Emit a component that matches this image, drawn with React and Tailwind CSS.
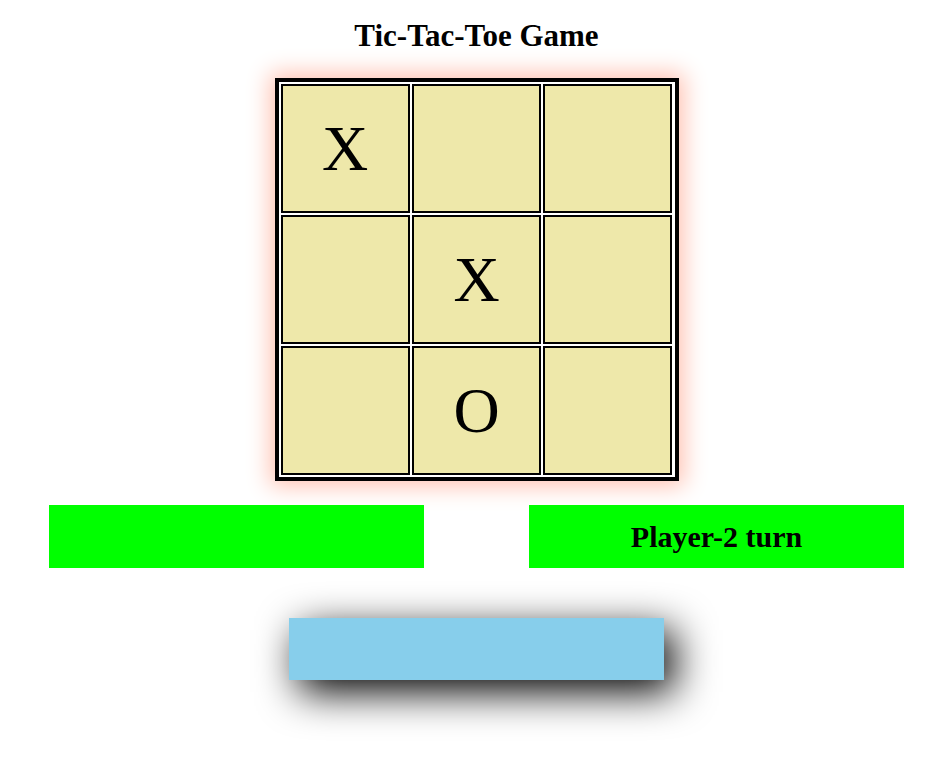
export default function App() {
  const cells = ["X", "", "", "", "X", "", "", "O", ""];
  return (
    <div
      className="w-[937px] min-h-[771px] bg-white pl-4 pt-[18px] flex flex-col items-center"
      style={{ fontFamily: '"Liberation Serif", "Times New Roman", serif' }}
    >
      <h1 className="text-[31px] leading-[35px] font-bold text-black">Tic-Tac-Toe Game</h1>
      <div className="mt-[25px] w-[404px] border-4 border-black p-[2px] grid grid-cols-3 gap-[2px] shadow-[0_0_22px_5px_#ffc2b2] bg-white">
        {cells.map((c, i) => (
          <div
            key={i}
            className="h-[129px] border-2 border-black bg-[#eee8aa] flex items-center justify-center text-[64px] leading-none text-black"
          >
            {c}
          </div>
        ))}
      </div>
      <div className="mt-[24px] flex gap-[105px]">
        <div className="w-[375px] h-[63px] bg-[#00ff00]" />
        <div className="w-[375px] h-[63px] bg-[#00ff00] flex items-center justify-center text-[30px] font-bold text-black">
          Player-2 turn
        </div>
      </div>
      <div className="mt-[50px] w-[375px] h-[62px] bg-[#87ceeb] shadow-[10px_12px_40px_#000]" />
    </div>
  );
}
